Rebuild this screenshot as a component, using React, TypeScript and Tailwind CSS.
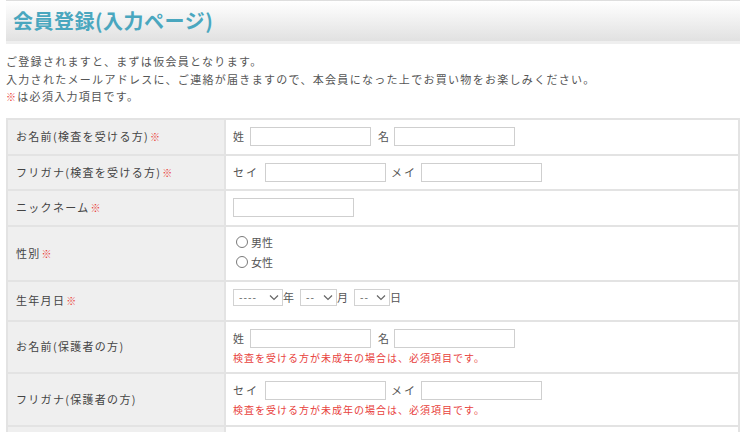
import React from "react";

const Req = () => (
  <span className="ml-[1px] text-[10px] font-bold text-[#ea3b35] align-middle">※</span>
);

const TextBox = ({ w = "w-[121px]" }: { w?: string }) => (
  <span className={`inline-block h-[19px] ${w} border border-[#cfcfcf] bg-white`} />
);

const FakeSelect = ({ text, w }: { text: string; w: string }) => (
  <span
    className={`inline-flex h-[17px] ${w} items-center justify-between border border-[#d2d2d2] bg-white pl-[5px] pr-[3px] text-[10px] leading-none text-[#555]`}
  >
    <span className="tracking-[1px]">{text}</span>
    <svg width="10" height="7" viewBox="0 0 10 7" className="mt-[1px]">
      <path d="M1 1.5 L5 5.5 L9 1.5" stroke="#666" strokeWidth="1.2" fill="none" />
    </svg>
  </span>
);

const Radio = ({ label }: { label: string }) => (
  <div className="flex items-center gap-[3px]">
    <span className="inline-block h-[12px] w-[12px] rounded-full border border-[#7a7a7a] bg-white" />
    <span className="text-[11px] text-[#555]">{label}</span>
  </div>
);

const Note = () => (
  <div className="mt-[2px] text-[10px] tracking-[1px] text-[#e8413c]">
    検査を受ける方が未成年の場合は、必須項目です。
  </div>
);

interface RowProps {
  label: string;
  required?: boolean;
  h: string;
  children?: React.ReactNode;
}

const Row = ({ label, required, h, children }: RowProps) => (
  <div className={`flex ${h} border-b-2 border-[#e3e3e3]`}>
    <div className="flex w-[218px] shrink-0 items-center border-r-2 border-[#e3e3e3] bg-[#efefef] pl-[8px] text-[11px] tracking-[1.3px] text-[#444]">
      {label}
      {required && <Req />}
    </div>
    <div className="flex flex-1 items-center bg-white pl-[7px]">{children}</div>
  </div>
);

const NameInputs = () => (
  <div className="flex items-center">
    <span className="mr-[6px] text-[11px] text-[#555]">姓</span>
    <TextBox />
    <span className="ml-[7px] mr-[5px] text-[11px] text-[#555]">名</span>
    <TextBox />
  </div>
);

const KanaInputs = () => (
  <div className="flex items-center">
    <span className="mr-[6px] text-[11px] tracking-[2px] text-[#555]">セイ</span>
    <TextBox />
    <span className="ml-[5px] mr-[4px] text-[11px] tracking-[2px] text-[#555]">メイ</span>
    <TextBox />
  </div>
);

export default function App() {
  return (
    <div className="h-[432px] w-[748px] overflow-hidden bg-white font-['Noto_Sans_CJK_JP',sans-serif]">
      <div className="mx-[6px] mr-[8px] border-t border-[#dedede]">
        <div className="flex h-[40px] items-center bg-gradient-to-b from-white to-[#e1e1e1] pl-[7px]">
          <h1 className="text-[20px] font-bold tracking-[0.5px] text-[#4aa7bf]">
            会員登録(入力ページ)
          </h1>
        </div>
        <div className="h-[3px] bg-[#efefef]" />
      </div>

      <div className="mx-[6px] mt-[9px] text-[11px] leading-[17.5px] tracking-[1.3px] text-[#555]">
        <p>ご登録されますと、まずは仮会員となります。</p>
        <p>入力されたメールアドレスに、ご連絡が届きますので、本会員になった上でお買い物をお楽しみください。</p>
        <p>
          <span className="text-[10px] font-bold text-[#ea3b35]">※</span>は必須入力項目です。
        </p>
      </div>

      <div className="mx-[6px] mr-[8px] mt-[12px] border-x-2 border-t-2 border-[#e3e3e3]">
        <Row label="お名前(検査を受ける方)" required h="h-[36px]">
          <NameInputs />
        </Row>
        <Row label="フリガナ(検査を受ける方)" required h="h-[35px]">
          <KanaInputs />
        </Row>
        <Row label="ニックネーム" required h="h-[36px]">
          <TextBox />
        </Row>
        <Row label="性別" required h="h-[55px]">
          <div className="flex flex-col gap-[4px] pl-[3px] pb-[2px]">
            <Radio label="男性" />
            <Radio label="女性" />
          </div>
        </Row>
        <Row label="生年月日" required h="h-[40px]">
          <div className="mb-[7px] flex items-center text-[11px] text-[#555]">
            <FakeSelect text="----" w="w-[50px]" />
            <span className="mr-[6px]">年</span>
            <FakeSelect text="--" w="w-[37px]" />
            <span className="mr-[6px]">月</span>
            <FakeSelect text="--" w="w-[36px]" />
            <span>日</span>
          </div>
        </Row>
        <Row label="お名前(保護者の方)" h="h-[52px]">
          <div className="flex flex-col">
            <NameInputs />
            <Note />
          </div>
        </Row>
        <Row label="フリガナ(保護者の方)" h="h-[53px]">
          <div className="flex flex-col">
            <KanaInputs />
            <Note />
          </div>
        </Row>
        <Row label="" h="h-[40px]" />
      </div>
    </div>
  );
}
